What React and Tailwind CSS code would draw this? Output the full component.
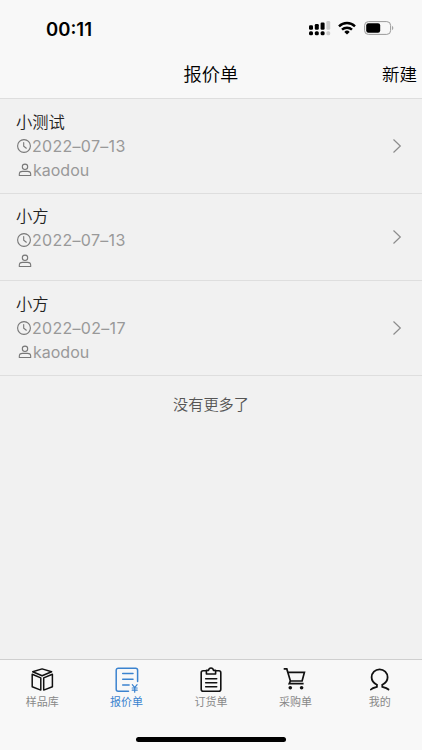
const BoxIcon = () => (
    <svg viewBox="0 0 28 28" className="w-7 h-7" fill="none" stroke="#111" strokeWidth="1.5" strokeLinejoin="round">
        <path d="M14.1 2.9 23.6 5.8l-9.500 4-9.400-4z" />
        <path d="M4.2 8.200 12.800 11.900v12.200L4.200 20.700z" />
        <path d="M24.400 8.200 15.700 11.900v12.200l8.700-3.400z" />
    </svg>
);

const QuoteIcon = () => (
    <svg viewBox="0 0 28 28" className="w-7 h-7" fill="none" stroke="#3b83cf" strokeWidth="1.5" strokeLinecap="round">
        <path d="M15.5 25.2H5.2a2 2 0 0 1-2-2V4.2a2 2 0 0 1 2-2h17.4a2 2 0 0 1 2 2v11.300" />
        <path d="M9.7 7.5H20M9.7 13.300H20M9.7 19h6.400" />
        <path d="M19.3 18.6l2.4 3 2.4-3M21.7 21.6v4.6M19.2 22h5M19.2 24.2h5" strokeWidth="1.2" />
    </svg>
);

const ClipboardIcon = () => (
    <svg viewBox="0 0 28 28" className="w-7 h-7" fill="none" stroke="#111" strokeWidth="1.6" strokeLinecap="round" strokeLinejoin="round">
        <path d="M9.4 4.8H6.2a2 2 0 0 0-2 2v16.4a2 2 0 0 0 2 2h15.6a2 2 0 0 0 2-2V6.8a2 2 0 0 0-2-2h-3.2" />
        <path d="M9.4 8V4.4h2.1c.3-1.6 1.3-2.4 2.5-2.4s2.2.8 2.5 2.4h2.1V8z" />
        <path d="M8.7 12.7h11M8.7 16.7h11M8.7 20.7h11" />
    </svg>
);

const CartIcon = () => (
    <svg viewBox="0 0 28 28" className="w-7 h-7" fill="none" stroke="#111" strokeWidth="1.7">
        <path d="M2.7 2.9h3.1L9.4 15h11.7l2.3-8.6H7" />
        <path d="M9.4 15l-1.2 2.7h14.4" />
        <circle cx="9.3" cy="21.7" r="1.8" fill="#111" stroke="none" />
        <circle cx="20.6" cy="21.7" r="1.8" fill="#111" stroke="none" />
    </svg>
);

const MineIcon = () => (
    <svg viewBox="0 0 28 28" className="w-7 h-7" fill="none" stroke="#111" strokeWidth="1.8" strokeLinecap="round">
        <path d="M4.9 23.5c1.2-1.3 3.6-2 6-2.6v-2.2C7.8 17.3 5.6 14.7 5.6 11.3a8 8 0 0 1 16 0c0 3.4-2.2 6-5.3 7.4v2.2c2.4.6 4.9 1.3 6.2 2.6" />
    </svg>
);

const ClockIcon = () => (
    <svg viewBox="0 0 14 14" className="w-3.5 h-3.5" fill="none" stroke="#777" strokeWidth="1.1" strokeLinecap="round">
        <circle cx="7" cy="7" r="6.4" />
        <path d="M6.7 3.5v3.700l2.6 2" />
    </svg>
);

const PersonIcon = () => (
    <svg viewBox="0 0 14 14" className="w-3.5 h-3.5" fill="none" stroke="#777" strokeWidth="1.1" strokeLinejoin="round">
        <circle cx="7" cy="3.8" r="2.7" />
        <path d="M1.3 12.5v-1.3c0-1.7 1.5-2.8 3.2-2.8h5c1.7 0 3.2 1.1 3.2 2.8v1.3z" />
    </svg>
);

const StatusBar = () => (
    <div className="h-[50px] flex items-center justify-between pl-[46px] pr-[28px] pt-[6px]">
        <span className="pt-0.5 font-['Inter'] text-[18.5px] font-semibold leading-none text-black">00:11</span>
        <div className="flex items-center">
            <svg viewBox="0 0 22 16" className="w-[22px] h-4" fill="#000">
                <rect x="0" y="5.2" width="4" height="4.6" rx="1.2" />
                <rect x="5.8" y="4" width="4" height="5.8" rx="1.2" />
                <rect x="11.6" y="2.5" width="4" height="7.3" rx="1.2" />
                <rect x="17.4" y="1" width="3.8" height="8.8" rx="1.2" fill="#ccc" />
                <rect x="0" y="11.3" width="4" height="4" rx="1.5" />
                <rect x="5.8" y="11.3" width="4" height="4" rx="1.5" />
                <rect x="11.6" y="11.3" width="4" height="4" rx="1.5" />
                <rect x="17.4" y="11.3" width="3.8" height="4" rx="1.5" fill="#ccc" />
            </svg>
            <svg viewBox="0 0 18 14" className="w-[18px] h-3.5 ml-[7px]" fill="none" stroke="#000" strokeWidth="2.4">
                <path d="M1 5.3a11.5 11.5 0 0 1 16 0" />
                <path d="M4 8.7a7.2 7.2 0 0 1 10 0" />
                <path d="M9 13.6 6.3 10.9a3.9 3.9 0 0 1 5.4 0z" fill="#000" stroke="none" />
            </svg>
            <svg viewBox="0 0 30 14" className="w-[30px] h-3.5 ml-2" fill="none">
                <rect x="0.6" y="0.6" width="26" height="12.8" rx="3.8" stroke="#9a9a9a" />
                <rect x="2.2" y="2.2" width="14" height="9.6" rx="2.2" fill="#000" />
                <path d="M28.1 4.8c1.6.8 1.6 3.6 0 4.4z" fill="#9a9a9a" />
            </svg>
        </div>
    </div>
);

const quotes = [
    { id: 1, title: '小测试', date: '2022–07–13', user: 'kaodou' },
    { id: 2, title: '小方', date: '2022–07–13', user: '' },
    { id: 3, title: '小方', date: '2022–02–17', user: 'kaodou' },
];

const tabs = [
    { label: '样品库', Icon: BoxIcon },
    { label: '报价单', Icon: QuoteIcon, active: true },
    { label: '订货单', Icon: ClipboardIcon },
    { label: '采购单', Icon: CartIcon },
    { label: '我的', Icon: MineIcon },
];

const QuoteRow = ({ quote }) => (
    <li className={`flex items-center justify-between pl-[17px] pr-5 border-b border-[#dedede] ${quote.user ? 'h-[94.5px]' : 'h-[87.5px]'}`}>
        <div className={`h-full flex flex-col ${quote.user ? 'pt-[11px]' : 'pt-2.5'}`}>
            <h3 className="-ml-px text-[16.3px] leading-[24px] text-[#222] font-[350]">{quote.title}</h3>
            <div className="flex items-center h-6 text-[#999]">
                <ClockIcon />
                <span className="ml-px text-[16px] tracking-[0.3px]">{quote.date}</span>
            </div>
            <div className={`flex items-center pl-px text-[#999] ${quote.user ? 'h-6' : 'h-[18px]'}`}>
                <PersonIcon />
                <span className="ml-px text-[16px]">{quote.user}</span>
            </div>
        </div>
        <svg viewBox="0 0 10 16" className="w-2.5 h-4" fill="none" stroke="#8c8c8c" strokeWidth="1.2">
            <path d="M1.5 1.5 8.3 8l-6.8 6.5" />
        </svg>
    </li>
);

export default function App() {
    return (
        <div className="w-full h-[750px] flex flex-col bg-[#f1f1f1] overflow-hidden font-['Inter','Noto_Sans_CJK_SC',sans-serif]">
            {/* Header */}
            <header className="h-[99px] shrink-0 bg-[#f8f8f8] border-b border-[#dedede]">
                <StatusBar />
                <div className="h-[49px] grid grid-cols-3 items-center pt-px text-[18.3px] text-black">
                    <span />
                    <h1 className="text-center font-[350]">报价单</h1>
                    <button className="text-right pt-px pr-[5px] text-[17.5px] font-[350]">新建</button>
                </div>
            </header>

            {/* Quote list */}
            <main className="flex-1">
                <ul>
                    {quotes.map((quote) => (
                        <QuoteRow key={quote.id} quote={quote} />
                    ))}
                </ul>
                <p className="pt-[17px] text-center text-[15.2px] leading-6 text-[#555] font-[350]">没有更多了</p>
            </main>

            {/* Bottom tabs */}
            <footer className="h-[91px] shrink-0 flex flex-col justify-between bg-[#f8f8f8] border-t border-[#cfcfcf]">
                <nav className="grid grid-cols-5 pt-1.5">
                    {tabs.map(({ label, Icon, active }) => (
                        <div key={label} className="flex flex-col items-center">
                            <Icon />
                            <span className={`text-[11px] leading-4 ${active ? 'text-[#3b83cf]' : 'text-[#888]'}`}>{label}</span>
                        </div>
                    ))}
                </nav>
                <div className="w-[150px] h-[5px] mb-2 mx-auto rounded-full bg-black" />
            </footer>
        </div>
    );
}
